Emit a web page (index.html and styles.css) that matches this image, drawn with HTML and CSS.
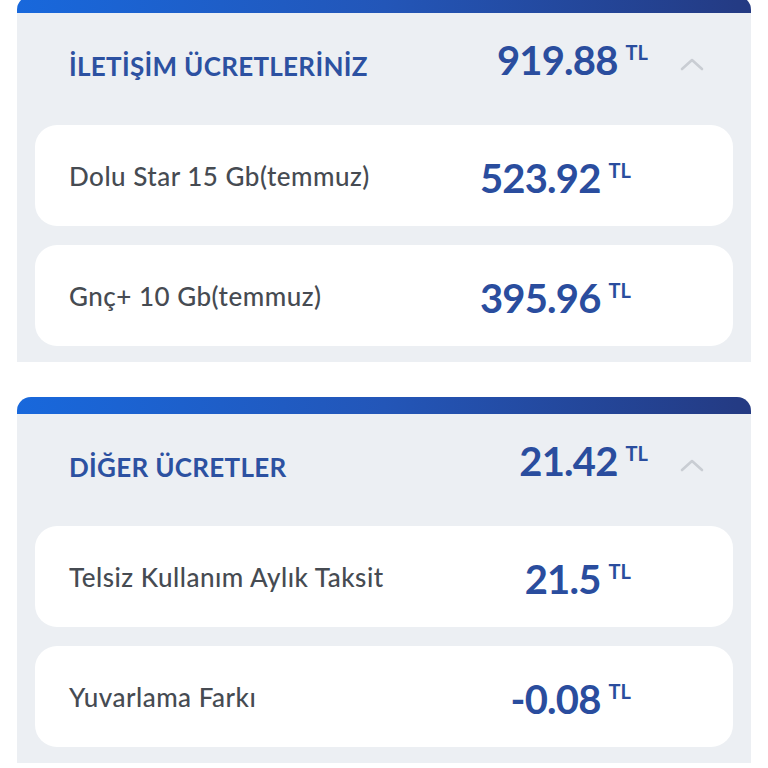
FILE: index.html
```html
<!DOCTYPE html>
<html lang="tr">
<head>
<meta charset="utf-8">
<link rel="stylesheet" href="styles.css">
</head>
<body>
<div class="page">
  <section class="card card-first">
    <div class="bar"></div>
    <div class="head">
      <div class="title">İLETİŞİM ÜCRETLERİNİZ</div>
      <div class="amount amount-head">919.88<span class="cur">TL</span></div>
      <svg class="chev" width="26" height="16" viewBox="0 0 26 16"><path d="M3 13 L13 4 L23 13" fill="none" stroke="#c9cdd3" stroke-width="2.6" stroke-linecap="round" stroke-linejoin="round"/></svg>
    </div>
    <div class="rows">
      <div class="row"><div class="label">Dolu Star 15 Gb(temmuz)</div><div class="amount">523.92<span class="cur">TL</span></div></div>
      <div class="row"><div class="label">Gnç+ 10 Gb(temmuz)</div><div class="amount">395.96<span class="cur">TL</span></div></div>
    </div>
  </section>
  <section class="card">
    <div class="bar"></div>
    <div class="head">
      <div class="title">DİĞER ÜCRETLER</div>
      <div class="amount amount-head">21.42<span class="cur">TL</span></div>
      <svg class="chev" width="26" height="16" viewBox="0 0 26 16"><path d="M3 13 L13 4 L23 13" fill="none" stroke="#c9cdd3" stroke-width="2.6" stroke-linecap="round" stroke-linejoin="round"/></svg>
    </div>
    <div class="rows">
      <div class="row"><div class="label">Telsiz Kullanım Aylık Taksit</div><div class="amount">21.5<span class="cur">TL</span></div></div>
      <div class="row"><div class="label">Yuvarlama Farkı</div><div class="amount">-0.08<span class="cur">TL</span></div></div>
    </div>
  </section>
</div>
</body>
</html>
```

FILE: styles.css
```css
html, body {
  margin: 0;
  padding: 0;
  background: #ffffff;
}
.page {
  padding: 0 17px;
  display: flex;
  flex-direction: column;
  gap: 35px;
  font-family: "Lato", "Noto Sans", sans-serif;
}
.card {
  background: #eceff3;
  border-radius: 14px 14px 0 0;
  overflow: hidden;
}
.card-first {
  margin-top: -4px;
}
.bar {
  height: 17px;
  background: linear-gradient(90deg, #1868dc 0%, #2356b8 50%, #243a82 100%);
}
.head {
  height: 112px;
  display: flex;
  align-items: center;
  padding: 0 46px 0 52px;
}
.title {
  flex: 1;
  color: #2c51a1;
  font-weight: 700;
  font-size: 26px;
  letter-spacing: 0.3px;
  margin-top: -6px;
}
.amount {
  color: #2a4d9e;
  font-weight: 700;
  font-size: 40px;
  letter-spacing: -0.8px;
  display: flex;
  align-items: flex-start;
  line-height: 1;
}
.cur {
  font-size: 20px;
  margin-left: 8px;
  margin-top: 2px;
  letter-spacing: 0;
}
.amount-head {
  margin-top: -18px;
}
.chev {
  margin-left: 31px;
  margin-top: -10px;
}
.rows {
  display: flex;
  flex-direction: column;
  gap: 19px;
  padding: 0 18px 16px;
}
.row {
  height: 101px;
  background: #ffffff;
  border-radius: 22px;
  display: flex;
  align-items: center;
  padding: 0 102px 0 34px;
}
.label {
  flex: 1;
  color: #464b52;
  font-size: 26px;
  font-weight: 500;
  letter-spacing: 0.5px;
}
.row .amount {
  margin-top: 4px;
}
```
